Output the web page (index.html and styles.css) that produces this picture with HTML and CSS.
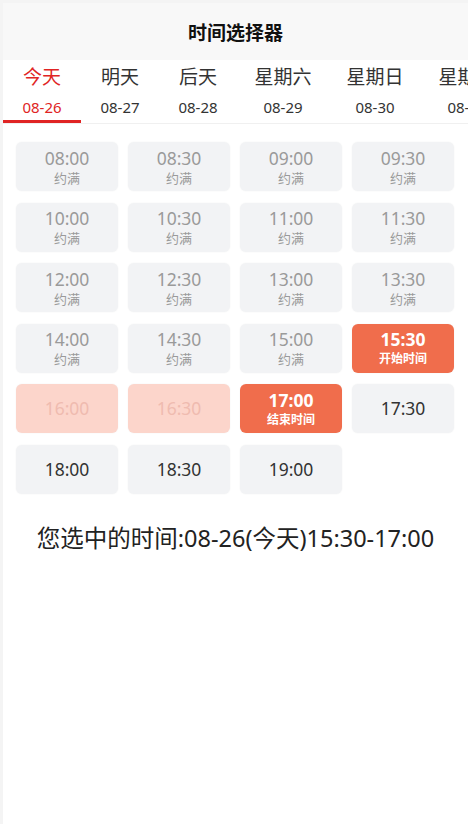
FILE: index.html
```html
<!DOCTYPE html>
<html lang="zh-CN">
<head>
    <meta charset="UTF-8">
    <meta name="viewport" content="width=device-width, initial-scale=1.0">
    <title>时间选择器</title>
    <link rel="stylesheet" href="styles.css">
</head>
<body>
<div class="page">
    <div class="header">时间选择器</div>

    <div class="tabs">
        <div class="tab active"><span class="tab-name">今天</span><span class="tab-date">08-26</span></div>
        <div class="tab"><span class="tab-name">明天</span><span class="tab-date">08-27</span></div>
        <div class="tab"><span class="tab-name">后天</span><span class="tab-date">08-28</span></div>
        <div class="tab"><span class="tab-name">星期六</span><span class="tab-date">08-29</span></div>
        <div class="tab"><span class="tab-name">星期日</span><span class="tab-date">08-30</span></div>
        <div class="tab"><span class="tab-name">星期一</span><span class="tab-date">08-31</span></div>
    </div>

    <div class="slots">
        <div class="slot full"><span class="time">08:00</span><span class="note">约满</span></div>
        <div class="slot full"><span class="time">08:30</span><span class="note">约满</span></div>
        <div class="slot full"><span class="time">09:00</span><span class="note">约满</span></div>
        <div class="slot full"><span class="time">09:30</span><span class="note">约满</span></div>

        <div class="slot full"><span class="time">10:00</span><span class="note">约满</span></div>
        <div class="slot full"><span class="time">10:30</span><span class="note">约满</span></div>
        <div class="slot full"><span class="time">11:00</span><span class="note">约满</span></div>
        <div class="slot full"><span class="time">11:30</span><span class="note">约满</span></div>

        <div class="slot full"><span class="time">12:00</span><span class="note">约满</span></div>
        <div class="slot full"><span class="time">12:30</span><span class="note">约满</span></div>
        <div class="slot full"><span class="time">13:00</span><span class="note">约满</span></div>
        <div class="slot full"><span class="time">13:30</span><span class="note">约满</span></div>

        <div class="slot full"><span class="time">14:00</span><span class="note">约满</span></div>
        <div class="slot full"><span class="time">14:30</span><span class="note">约满</span></div>
        <div class="slot full"><span class="time">15:00</span><span class="note">约满</span></div>
        <div class="slot picked"><span class="time">15:30</span><span class="note">开始时间</span></div>

        <div class="slot between"><span class="time">16:00</span></div>
        <div class="slot between"><span class="time">16:30</span></div>
        <div class="slot picked"><span class="time">17:00</span><span class="note">结束时间</span></div>
        <div class="slot"><span class="time">17:30</span></div>

        <div class="slot"><span class="time">18:00</span></div>
        <div class="slot"><span class="time">18:30</span></div>
        <div class="slot"><span class="time">19:00</span></div>
    </div>

    <div class="result">您选中的时间:08-26(今天)15:30-17:00</div>
</div>
</body>
</html>
```

FILE: styles.css
```css
body {
    margin: 0;
    font-family: "Noto Sans", "Noto Sans CJK SC", sans-serif;
    background-color: #f4f4f4;
    color: #222;
}

.page {
    margin: 3px 0 0 3px;
    min-height: 821px;
    background-color: #fff;
    overflow: hidden;
}

.header {
    height: 57px;
    line-height: 60px;
    background-color: #f8f8f8;
    text-align: center;
    font-size: 19px;
    font-weight: bold;
    color: #111;
}

.tabs {
    display: flex;
    height: 63px;
    border-bottom: 1px solid #f0f0f0;
    white-space: nowrap;
    overflow: hidden;
}

.tab {
    display: flex;
    flex-direction: column;
    align-items: center;
    flex-shrink: 0;
    min-width: 78px;
    padding: 0 17.5px;
    border-bottom: 3px solid transparent;
    box-sizing: border-box;
}

.tab-name {
    margin-top: 3px;
    font-size: 19px;
    line-height: 28px;
    color: #333;
}

.tab-date {
    margin-top: 5px;
    font-size: 15px;
    line-height: 22px;
    color: #333;
}

.tab.active {
    border-bottom-color: #e02424;
}

.tab.active .tab-name,
.tab.active .tab-date {
    color: #e02424;
}

.slots {
    display: grid;
    grid-template-columns: repeat(4, 102px);
    grid-auto-rows: 49px;
    column-gap: 10px;
    row-gap: 11.6px;
    padding: 18px 0 0 13px;
}

.slot {
    display: flex;
    flex-direction: column;
    align-items: center;
    justify-content: center;
    background-color: #f2f3f5;
    border-radius: 6px;
    box-shadow: 0 0 2px rgba(0, 0, 0, 0.06);
    color: #333;
}

.time {
    font-size: 17.5px;
    line-height: 21px;
}

.note {
    font-size: 13px;
    line-height: 16px;
    margin-top: 1px;
}

.slot.full {
    color: #9a9a9a;
}

.slot.picked {
    background-color: #f06d4c;
    color: #fff;
}

.slot.picked .time {
    font-weight: bold;
}

.slot.picked .note {
    font-size: 12px;
    font-weight: bold;
}

.slot.between {
    background-color: #fcd5cb;
    color: #efbbb0;
}

.result {
    margin-top: 26px;
    text-align: center;
    font-size: 23.5px;
    color: #222;
}
```
